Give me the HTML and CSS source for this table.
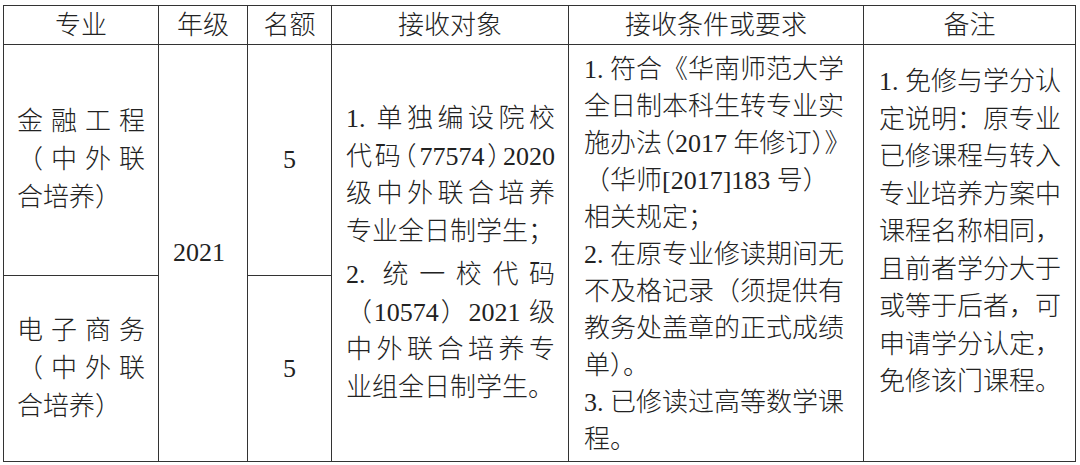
FILE: index.html
```html
<!DOCTYPE html>
<html lang="zh-CN">
<head>
<meta charset="utf-8">
<title>转专业接收表</title>
<link rel="stylesheet" href="styles.css">
</head>
<body>
<div class="table">
  <div class="cell head">专业</div>
  <div class="cell head">年级</div>
  <div class="cell head">名额</div>
  <div class="cell head">接收对象</div>
  <div class="cell head">接收条件或要求</div>
  <div class="cell head">备注</div>

  <div class="cell major major-1">
    <span class="ln j">金融工程</span>
    <span class="ln j">（中外联</span>
    <span class="ln">合培养）</span>
  </div>
  <div class="cell year">2021</div>
  <div class="cell quota quota-1">5</div>

  <div class="cell target">
    <div class="para">
      <span class="ln j">1. 单独编设院校</span>
      <span class="ln j">代码<span class="h">（</span>77574<span class="h">）</span>2020</span>
      <span class="ln j">级中外联合培养</span>
      <span class="ln">专业全日制学生；</span>
    </div>
    <div class="para">
      <span class="ln j">2. 统一校代码</span>
      <span class="ln j">（10574）2021 级</span>
      <span class="ln j">中外联合培养专</span>
      <span class="ln">业组全日制学生。</span>
    </div>
  </div>

  <div class="cell cond">
    <div class="para">
      <span class="ln">1. 符合《华南师范大学</span>
      <span class="ln">全日制本科生转专业实</span>
      <span class="ln">施办法<span class="h">（</span>2017 年修订<span class="h">）</span>》</span>
      <span class="ln">（华师[2017]183 号）</span>
      <span class="ln">相关规定；</span>
    </div>
    <div class="para">
      <span class="ln">2. 在原专业修读期间无</span>
      <span class="ln">不及格记录（须提供有</span>
      <span class="ln">教务处盖章的正式成绩</span>
      <span class="ln">单）。</span>
    </div>
    <div class="para">
      <span class="ln">3. 已修读过高等数学课</span>
      <span class="ln">程。</span>
    </div>
  </div>

  <div class="cell note">
    <span class="ln">1. 免修与学分认</span>
    <span class="ln">定说明：原专业</span>
    <span class="ln">已修课程与转入</span>
    <span class="ln">专业培养方案中</span>
    <span class="ln">课程名称相同，</span>
    <span class="ln">且前者学分大于</span>
    <span class="ln">或等于后者，可</span>
    <span class="ln">申请学分认定，</span>
    <span class="ln">免修该门课程。</span>
  </div>

  <div class="cell major major-2">
    <span class="ln j">电子商务</span>
    <span class="ln j">（中外联</span>
    <span class="ln">合培养）</span>
  </div>
  <div class="cell quota quota-2">5</div>
</div>
</body>
</html>
```

FILE: styles.css
```css
html, body {
  margin: 0;
  padding: 0;
  background: #ffffff;
}

body {
  padding: 5px 0 0 3px;
  font-family: "Liberation Serif", "Noto Sans CJK SC", serif;
  font-size: 26px;
  font-weight: 300;
  color: #222222;
}

.table {
  display: grid;
  grid-template-columns: 155px 89px 84px 237px 295px 212px;
  grid-template-rows: 39px 231px 186px;
  width: max-content;
  border-top: 1px solid #333333;
  border-left: 1px solid #333333;
}

.cell {
  box-sizing: border-box;
  border-right: 1px solid #333333;
  border-bottom: 1px solid #333333;
}

.head {
  display: flex;
  align-items: center;
  justify-content: center;
  line-height: 1;
  padding-top: 1px;
}

.ln {
  display: block;
  white-space: nowrap;
}

.j {
  text-align: justify;
  text-align-last: justify;
}

.h {
  font-feature-settings: "halt" 1;
}

/* 专业 */
.major {
  display: flex;
  flex-direction: column;
  justify-content: center;
  padding: 0 13px;
  line-height: 38px;
}
.major-1 { grid-column: 1; grid-row: 2; }
.major-2 { grid-column: 1; grid-row: 3; }

/* 年级 */
.year {
  grid-column: 2;
  grid-row: 2 / 4;
  display: flex;
  align-items: center;
  justify-content: center;
  padding-right: 8px;
}

/* 名额 */
.quota {
  display: flex;
  align-items: center;
  justify-content: center;
}
.quota-1 { grid-column: 3; grid-row: 2; }
.quota-2 { grid-column: 3; grid-row: 3; }

/* 接收对象 */
.target {
  grid-column: 4;
  grid-row: 2 / 4;
  display: flex;
  flex-direction: column;
  justify-content: center;
  gap: 6px;
  padding: 0 13px 0 14px;
  line-height: 37.5px;
}

/* 接收条件或要求 */
.cond {
  grid-column: 5;
  grid-row: 2 / 4;
  padding: 6px 14px 0 15px;
  line-height: 37px;
}

/* 备注 */
.note {
  grid-column: 6;
  grid-row: 2 / 4;
  padding: 18px 14px 0 15px;
  line-height: 37.5px;
}
```
